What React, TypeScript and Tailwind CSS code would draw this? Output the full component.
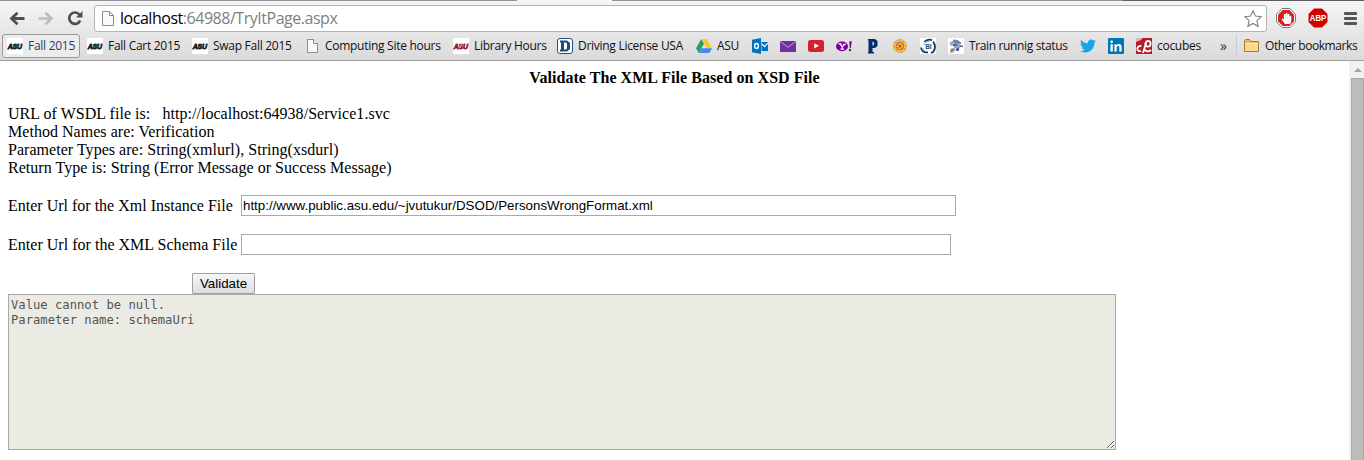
import React from "react";
import { FaTwitter, FaHandPaper } from "react-icons/fa";

function Svg({ size = 16, children }: { size?: number; children: React.ReactNode }) {
  return (
    <svg width={size} height={size} viewBox={`0 0 ${size} ${size}`} className="block shrink-0">
      {children}
    </svg>
  );
}

function AsuIcon({ color, accent }: { color: string; accent?: string }) {
  return (
    <Svg>
      <rect width="16" height="16" fill="#fff" />
      <text x="0.7" y="11" fontSize="8" fontWeight="900" fontStyle="italic" fontFamily="Liberation Sans, sans-serif" fill={color} stroke={color} strokeWidth="0.8" textLength="14" lengthAdjust="spacingAndGlyphs">
        ASU
      </text>
      {accent && <path d="M6 9.5l3-3" stroke={accent} strokeWidth="1.2" />}
    </Svg>
  );
}

function PageIcon() {
  return (
    <Svg>
      <path d="M3.5 1.5h6l4 4v9h-10z" fill="#f8f8f8" stroke="#8c8c8c" />
      <path d="M9.5 1.5v4h4" fill="#fff" stroke="#8c8c8c" />
    </Svg>
  );
}

function DIcon() {
  return (
    <Svg>
      <rect x="0.5" y="0.5" width="15" height="15" rx="2.5" fill="#fff" stroke="#24507f" />
      <path fillRule="evenodd" fill="#1d4b7e" d="M3 2.5h7l3 2.500v6l-3 2.500H3v-2h1v-7H3zM7 4.500v7h1.800l1.200-1v-5l-1.200-1z" />
    </Svg>
  );
}

function DriveIcon() {
  return (
    <Svg>
      <path d="M5.300 1L0 10.300 2.700 15 8 5.700z" fill="#1fa463" />
      <path d="M5.300 1h5.400L16 10.300h-5.400z" fill="#fdc92f" />
      <path d="M5.400 10.300H16L13.300 15H2.700z" fill="#4687f4" />
    </Svg>
  );
}

function OutlookIcon() {
  return (
    <Svg>
      <path d="M9.500 4h6.500v9H9.500z" fill="#0072c6" />
      <path d="M10 6l2.600 2.600L16 5" fill="none" stroke="#fff" strokeWidth="1.2" />
      <path d="M0 1.800L9 0v16L0 14.200z" fill="#0072c6" />
      <ellipse cx="4.500" cy="8" rx="1.900" ry="2.500" fill="none" stroke="#fff" strokeWidth="1.400" />
    </Svg>
  );
}

function MailIcon() {
  return (
    <Svg>
      <path d="M0 3h16v11H0z" fill="#7030a0" />
      <path d="M0 3.300l8 6 8-6" fill="none" stroke="#c9b0da" strokeWidth="0.900" />
    </Svg>
  );
}

function YoutubeIcon() {
  return (
    <Svg>
      <rect x="0" y="2" width="16" height="12" rx="2.500" fill="#d2232a" />
      <path d="M6.200 5.200v5.200L11 7.800z" fill="#fff" />
    </Svg>
  );
}

function YahooIcon() {
  return (
    <Svg>
      <ellipse cx="6" cy="8.400" rx="6" ry="4.800" fill="#7b0099" />
      <path d="M2.500 5.800h3M6.800 6.300h3M4 6l2.300 2.800L8.500 6.500M6.200 8.500V11M4.500 11.200h3.500" fill="none" stroke="#fff" strokeWidth="1.200" />
      <path d="M13.300 3.300h2.500l-1 6.700h-1.100z" fill="#7b0099" />
      <circle cx="14" cy="12" r="1.200" fill="#7b0099" />
    </Svg>
  );
}

function PIcon() {
  return (
    <Svg>
      <path fillRule="evenodd" fill="#002f6f" d="M4 1h7L13.500 3v5L11 10H8.500v4H10V15.500H4v-1.500h.5v-11.500H4zM8.500 3.800v3.700h.9l.6-.8v-2l-.6-.9z" />
    </Svg>
  );
}

function FlowerIcon() {
  return (
    <Svg>
      <circle cx="8" cy="8" r="6.600" fill="#f59a23" stroke="#b9a7a8" strokeWidth="0.800" />
      <circle cx="8" cy="8" r="5.200" fill="none" stroke="#ffd02e" strokeWidth="2" strokeDasharray="2.040 2.040" />
      <circle cx="8" cy="8" r="3.500" fill="none" stroke="#5a62b8" strokeWidth="1.300" strokeDasharray="1.300 1.450" />
      <path d="M8 5v6M5 8h6" stroke="#ffd02e" strokeWidth="1.300" />
      <circle cx="8" cy="8" r="1.500" fill="#e0442a" />
    </Svg>
  );
}

function BiIcon() {
  return (
    <Svg>
      <rect width="16" height="16" fill="#fff" />
      <path d="M4.500 3.800C6.500 1.500 9 1 12 2.200M13 3.500c2.600 3 2.600 7.500.2 10.500l-2.200.8M1 9.500c.3 3.500 3 5.500 7 4.800" fill="none" stroke="#12365d" strokeWidth="1.800" />
      <path d="M4 7C4 4.500 6 3.300 9 3.500M3 10c0 2 1 3 3 3.300" fill="none" stroke="#58a5c7" strokeWidth="0.900" />
      <text x="5.300" y="11" fontSize="6.500" fontWeight="bold" fontFamily="Liberation Sans, sans-serif" fill="#174e78" textLength="6" lengthAdjust="spacingAndGlyphs">
        BI
      </text>
    </Svg>
  );
}

function TrainIcon() {
  return (
    <Svg>
      <rect width="16" height="16" fill="#fff" />
      <path d="M1 5l3-2 4 1-1 3-4 1z" fill="#a3afc0" />
      <path d="M5 1.500l5 .5 1 3-3 1-3-2z" fill="#6f86ab" />
      <path d="M6 6l5-1 2 3-2 3-5-1z" fill="#8ea4c6" />
      <path d="M10 3.500l3 2M5 7.500l4-1" stroke="#39527e" strokeWidth="1.300" />
      <path d="M2.500 10.500l4-.5 1 2-2.500 3H1.500z" fill="#b9b2a6" />
      <circle cx="9.500" cy="11.500" r="1.700" fill="#3f5c93" />
      <path d="M12 8l3 .5M3 13l3-2" stroke="#55637c" strokeWidth="1.400" />
    </Svg>
  );
}

function LinkedinIcon() {
  return (
    <Svg>
      <rect width="16" height="16" rx="1" fill="#0077b5" />
      <path d="M2.500 6.200h2.300v7.200H2.500zM6.400 6.200h2.200v1c.5-.8 1.300-1.200 2.300-1.200 2 0 2.700 1.300 2.700 3.300v4.100h-2.300V9.600c0-1-.3-1.700-1.200-1.700s-1.400.7-1.400 1.700v3.800H6.400z" fill="#fff" />
      <circle cx="3.650" cy="3.800" r="1.350" fill="#fff" />
    </Svg>
  );
}

function CocubesIcon() {
  return (
    <Svg>
      <rect width="16" height="16" fill="#b01e2a" />
      <path d="M0 0h6.500L5 2 0 4z" fill="#e3b3b6" />
      <path d="M5.500 8.200C3.800 7.400 1.300 8.500 1.300 10.800s2.200 2.700 3.700 2.200" fill="none" stroke="#fff" strokeWidth="1.800" />
      <path d="M7 15l3.200-10.500" stroke="#fff" strokeWidth="1.800" />
      <ellipse cx="12" cy="5.800" rx="2.600" ry="2.800" fill="none" stroke="#fff" strokeWidth="1.800" />
      <path d="M8.500 11.500c1.500 2.500 4.500 2.500 6.500.3" fill="none" stroke="#fff" strokeWidth="1.800" />
    </Svg>
  );
}

function FolderIcon() {
  return (
    <Svg>
      <path d="M.5 13.500v-11l1-1h4l1.500 2h7.500v10z" fill="#e9b764" stroke="#a77b33" />
      <path d="M1 13V5.500h13V13z" fill="#fcd78e" />
      <path d="M1 5.500h13" stroke="#fff0c6" />
    </Svg>
  );
}

type Mark = { icon: React.ReactNode; label?: string; cls?: string };

const marks: Mark[] = [
  { icon: <AsuIcon color="#10241c" />, label: "Fall Cart 2015", cls: "w-[72px]" },
  { icon: <AsuIcon color="#10241c" />, label: "Swap Fall 2015", cls: "w-[79px]" },
  { icon: <PageIcon />, label: "Computing Site hours", cls: "w-[116px]" },
  { icon: <AsuIcon color="#981b44" accent="#f3a62b" />, label: "Library Hours", cls: "w-[71px]" },
  { icon: <DIcon />, label: "Driving License USA", cls: "w-[106px]" },
  { icon: <DriveIcon />, label: "ASU", cls: "w-[23px]" },
  { icon: <OutlookIcon /> },
  { icon: <MailIcon /> },
  { icon: <YoutubeIcon /> },
  { icon: <YahooIcon /> },
  { icon: <PIcon /> },
  { icon: <FlowerIcon /> },
  { icon: <BiIcon /> },
  { icon: <TrainIcon />, label: "Train runnig status", cls: "w-[99px] tracking-[-0.36px]" },
  { icon: <FaTwitter size={16} color="#18a5ea" className="shrink-0" /> },
  { icon: <LinkedinIcon /> },
  { icon: <CocubesIcon />, label: "cocubes", cls: "w-[44px]" },
];

function Toolbar() {
  return (
    <div className="flex h-[31px] items-start">
      <div className="flex w-[94px] shrink-0 gap-[13px] pt-[8px] pl-[9px]">
        <Svg>
          <path d="M15.500 8.500H3M8.500 2.800L2.500 8.500l6 5.700" fill="none" stroke="#505050" strokeWidth="2.800" />
        </Svg>
        <Svg>
          <path d="M0.500 8.500H13M7.500 2.800l6 5.700-6 5.700" fill="none" stroke="#bdbdbd" strokeWidth="2.600" />
        </Svg>
        <Svg>
          <path d="M12.700 5A5.700 5.700 0 1 0 13.200 10.500" fill="none" stroke="#505050" strokeWidth="2.700" />
          <path d="M15.500 1v6.500H9z" fill="#505050" />
        </Svg>
      </div>
      <div className="mt-[3px] flex h-[27px] w-[1173px] shrink-0 items-center rounded-[3px] border border-[#b4b4b4] bg-white pr-[4px] pl-[5px]">
        <Svg>
          <path d="M2.500.5h7l4 4v10h-11z" fill="#fafafa" stroke="#8c8c8c" />
          <path d="M9.500.5v4h4" fill="none" stroke="#8c8c8c" />
        </Svg>
        <span className="mt-[-2px] ml-[4px] text-[16px] leading-[24px] tracking-[-0.47px] whitespace-nowrap text-[#808080]">
          <span className="text-black">localhost</span>:64988/TryItPage.aspx
        </span>
        <svg width="18" height="18" viewBox="0 0 18 18" className="ml-auto">
          <path d="M9 .8l2.400 5.300 5.800.6-4.300 3.900 1.200 5.700L9 13.400l-5.100 2.900 1.200-5.700L.8 6.700l5.800-.6z" fill="#fff" stroke="#808080" strokeWidth="1.100" />
        </svg>
      </div>
      <div className="flex items-center pt-[6px] pl-[9px]">
        <div className="grid h-[20px] w-[20px] place-items-center [&>*]:[grid-area:1/1]">
          <Svg size={20}>
            <path d="M6.200.5h7.600l5.700 5.700v7.600l-5.700 5.700H6.200L.5 13.800V6.200z" fill="#fff" stroke="#777" />
            <path d="M6.700 2h6.600L18 6.700v6.600L13.300 18H6.700L2 13.300V6.700z" fill="#d81e1e" />
          </Svg>
          <FaHandPaper size={11} color="#fff" />
        </div>
        <div className="ml-[12px]">
          <Svg size={20}>
            <path d="M6 .5h8L19.500 6v8L14 19.500H6L.5 14V6z" fill="#d40000" />
            <text x="1.800" y="13.400" fontSize="9" fontWeight="bold" fontFamily="Liberation Sans, sans-serif" fill="#fff" textLength="16.500" lengthAdjust="spacingAndGlyphs">
              ABP
            </text>
          </Svg>
        </div>
        <div className="ml-[16px] flex flex-col gap-[2px]">
          <div className="h-[3px] w-[13px] rounded-[1px] bg-[#555]" />
          <div className="h-[3px] w-[13px] rounded-[1px] bg-[#555]" />
          <div className="h-[3px] w-[13px] rounded-[1px] bg-[#555]" />
        </div>
      </div>
    </div>
  );
}

function BookmarksBar() {
  return (
    <div className="flex h-[25px] items-center pl-[2px] text-[12px] leading-[16px] tracking-[-0.28px] whitespace-nowrap text-[#111]">
      <div className="flex h-[24px] w-[78px] shrink-0 items-center gap-[5px] rounded-[3px] border border-[#999] bg-[#ececec] pl-[4px] text-[#2b3a6c]">
        <AsuIcon color="#10241c" />
        <span>Fall 2015</span>
      </div>
      <div className="ml-[7px] flex items-center gap-[12px]">
        {marks.map((m, i) => (
          <div key={i} className="flex items-center gap-[5px]">
            {m.icon}
            {m.label && <span className={m.cls}>{m.label}</span>}
          </div>
        ))}
      </div>
      <span className="ml-[19px] w-[8px] text-[14px] text-[#333]">»</span>
      <div className="ml-[8px] h-[22px] w-px bg-[#c4cdd8]" />
      <div className="ml-[7px] flex items-center gap-[5px]">
        <FolderIcon />
        <span className="tracking-[-0.42px]">Other bookmarks</span>
      </div>
    </div>
  );
}

export default function App() {
  return (
    <div className="flex h-[460px] w-[1364px] flex-col overflow-hidden bg-white font-['Open_Sans','Noto_Sans',sans-serif]">
      <header className="h-[61px] shrink-0 border-b border-[#a0a0a0] bg-linear-to-b from-[#f6f6f6] to-[#dadada]">
        <div className="flex h-[2px]">
          <div className="h-px w-[517px] bg-[#92929b]" />
          <div className="w-[95px]" />
          <div className="h-px w-[511px] bg-[#92929b]" />
          <div className="h-px flex-1 bg-[#5f5b62]" />
        </div>
        <Toolbar />
        <BookmarksBar />
      </header>
      <div className="flex min-h-0 flex-1">
        <main className="w-[1349px] shrink-0 p-[8px] font-['Liberation_Serif',serif] text-[16px] leading-[18px] text-black">
          <h1 className="text-center font-bold tracking-[0.05px]">Validate The XML File Based on XSD File</h1>
          <div className="mt-[18px] tracking-[0.035px] whitespace-pre">
            <p>URL of WSDL file is: {"\u00a0"} http://localhost:64938/Service1.svc</p>
            <p>Method Names are: Verification</p>
            <p>Parameter Types are: String(xmlurl), String(xsdurl)</p>
            <p>Return Type is: String (Error Message or Success Message)</p>
          </div>
          <div className="mt-[18px] flex h-[21px] items-center">
            <label className="w-[233px]">Enter Url for the Xml Instance File</label>
            <input
              readOnly
              className="h-[21px] w-[715px] border border-[#a9a9a9] px-px font-['Liberation_Sans',sans-serif] text-[13.333px] leading-[15px]"
              value="http://www.public.asu.edu/~jvutukur/DSOD/PersonsWrongFormat.xml"
            />
          </div>
          <div className="mt-[18px] flex h-[21px] items-center">
            <label className="w-[233px] tracking-[0.02px]">Enter Url for the XML Schema File</label>
            <input readOnly className="h-[21px] w-[710px] border border-[#a9a9a9] px-px" value="" />
          </div>
          <button className="mt-[18px] ml-[184px] block h-[21px] w-[63px] rounded-[1px] border border-[#a0a0a0] bg-linear-to-b from-[#f6f6f6] to-[#dddddd] text-center font-['Liberation_Sans',sans-serif] text-[13.333px] leading-[19px]">
            Validate
          </button>
          <textarea
            readOnly
            className="block h-[156px] w-[1108px] resize border border-[#a9a9a9] bg-[#ebebe4] p-[2px] pt-[3px] font-['DejaVu_Sans_Mono',monospace] text-[12.2px] leading-[15px] text-[#545454]"
            value={"Value cannot be null.\nParameter name: schemaUri"}
          />
        </main>
        <div className="flex flex-1 flex-col bg-[#f1f1f1] pl-[2px]">
          <div className="flex h-[17px] items-center justify-center">
            <svg width="8" height="4" viewBox="0 0 8 4">
              <path d="M0 4l4-4 4 4z" fill="#a3a3a3" />
            </svg>
          </div>
          <div className="flex-1 border border-b-0 border-[#a8a8a8] bg-[#bcbcbc]" />
        </div>
      </div>
    </div>
  );
}
